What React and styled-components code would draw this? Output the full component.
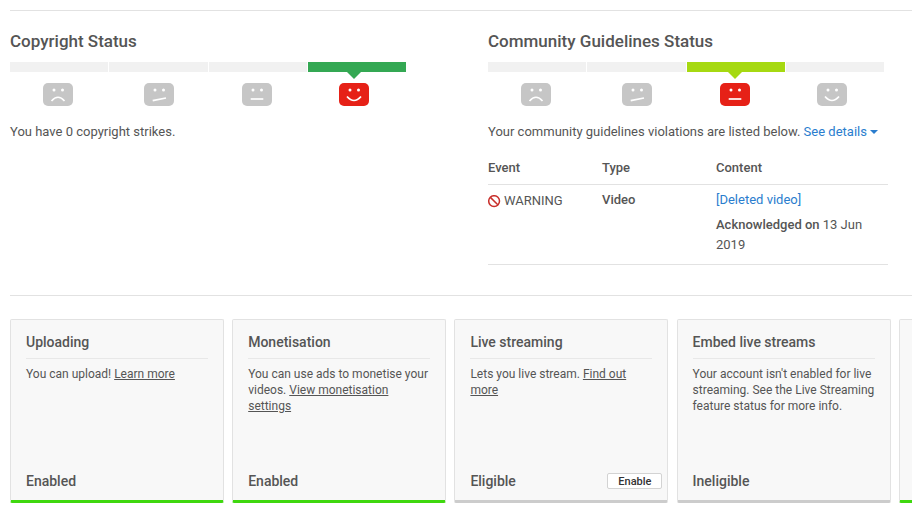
import styled, { createGlobalStyle } from 'styled-components';

const Global = createGlobalStyle`
  html, body { margin: 0; padding: 0; background: #fff; overflow: hidden; }
  body { font-family: Roboto, "Liberation Sans", sans-serif; font-size: 13px; color: #555; }
`;

const Page = styled.div`
  width: 912px;
  height: 512px;
  overflow: hidden;
  padding: 10px 0 0 10px;
  box-sizing: border-box;
`;
const Rule = styled.hr`
  margin: 0;
  border: 0;
  border-top: 1px solid #e2e2e2;
`;
const StatusRow = styled.div`
  display: flex;
  height: 284px;
`;
const StatusCol = styled.section`
  flex: 0 0 478px;
  padding-top: 20px;
`;
const Heading = styled.h2`
  margin: 0 0 11px;
  font-size: 17px;
  line-height: 20px;
  font-weight: 500;
  color: #555;
`;
const Meter = styled.div`
  display: grid;
  grid-template-columns: repeat(4, 98.25px);
  column-gap: 1px;
  width: 396px;
`;
const Segment = styled.div`
  height: 10px;
  background: ${p => p.$color || '#f1f1f1'};
`;
const Faces = styled.div`
  display: grid;
  grid-template-columns: repeat(4, 99px);
  width: 396px;
  margin-top: 11px;
`;
const FaceCell = styled.div`
  position: relative;
  height: 23px;
  padding-left: ${p => p.$offset}px;
`;
const Caret = styled.span`
  position: absolute;
  left: ${p => p.$offset + 8}px;
  top: -11px;
  border-style: solid;
  border-width: 7px 7px 0;
  border-color: ${p => p.$color} transparent transparent;
`;
const StatusText = styled.p`
  margin: 18px 0 0;
  line-height: 16px;
`;
const DetailLink = styled.a`
  color: #2a7dce;
`;
const Arrow = styled.span`
  display: inline-block;
  margin-left: 3px;
  vertical-align: 2px;
  border-style: solid;
  border-width: 4px 4px 0;
  border-color: #2a7dce transparent transparent;
`;
const Table = styled.div`
  display: grid;
  grid-template-columns: 114px 114px 172px;
  width: 400px;
  margin-top: 20px;
`;
const HeadCell = styled.div`
  font-weight: 500;
  line-height: 16px;
  padding-bottom: 8px;
  border-bottom: 1px solid #e2e2e2;
`;
const Cell = styled.div`
  padding-top: 7px;
  line-height: 16px;
  height: 72px;
  border-bottom: 1px solid #e2e2e2;
  font-weight: ${p => (p.$bold ? 500 : 400)};
`;
const Warning = styled.div`
  display: flex;
  align-items: center;
  gap: 3px;
  margin-top: 1px;
`;
const ContentLink = styled.a`
  color: #2a7dce;
`;
const Acknowledged = styled.div`
  margin-top: 7px;
  line-height: 20px;
  b { font-weight: 500; }
`;
const Cards = styled.div`
  display: flex;
  gap: 8.2px;
  margin-top: 23px;
`;
const Card = styled.article`
  flex: 0 0 214px;
  height: 184px;
  box-sizing: border-box;
  display: flex;
  flex-direction: column;
  padding: 13px 15px 0;
  background: #f8f8f8;
  border: 1px solid #e2e2e2;
  border-bottom: 3px solid ${p => p.$bar};
  border-radius: 2px;
`;
const CardTitle = styled.h3`
  margin: 0;
  padding-bottom: 6px;
  border-bottom: 1px solid #e8e8e8;
  font-size: 14px;
  line-height: 19px;
  font-weight: 500;
  color: #555;
`;
const CardText = styled.p`
  margin: 7px 0 0;
  flex: 1;
  font-size: 12px;
  line-height: 16px;
  a { color: #555; text-decoration: underline; }
`;
const CardFoot = styled.div`
  display: flex;
  align-items: center;
  justify-content: space-between;
  height: 16px;
  margin-bottom: 11px;
  margin-right: -10px;
  font-size: 14px;
  font-weight: 500;
`;
const EnableButton = styled.button`
  width: 55px;
  height: 16px;
  padding: 0;
  background: #fff;
  border: 1px solid #d3d3d3;
  border-radius: 2px;
  font: 500 11px Roboto, sans-serif;
  color: #333;
`;

const mouths = [
  'M8.5 18 Q15 10.5 21.5 18',
  'M8.7 17.7 L22 15',
  'M8.7 16 H21.3',
  'M8 13.5 Q15 21.5 22 13.5',
];

const Face = ({ mood, active }) => (
  <svg width="30" height="23" viewBox="0 0 30 23">
    <rect width="30" height="23" rx="5" fill={active ? '#e62117' : '#c6c6c6'} />
    <circle cx="11" cy="7" r="1.5" fill="#fff" />
    <circle cx="19.5" cy="7" r="1.5" fill="#fff" />
    <path d={mouths[mood]} fill="none" stroke="#fff" strokeWidth="1.7" />
  </svg>
);

const BanIcon = () => (
  <svg width="13" height="13" viewBox="0.4 0.4 13 13">
    <circle cx="6.5" cy="6.5" r="5.4" fill="none" stroke="#c9302c" strokeWidth="1.5" />
    <path d="M2.8 2.8 L10.2 10.2" stroke="#c9302c" strokeWidth="1.5" />
  </svg>
);

const offsets = [33, 35, 34, 32];

const StatusMeter = ({ active, color }) => (
  <>
    <Meter>
      {offsets.map((_, i) => (
        <Segment key={i} $color={i === active ? color : null} />
      ))}
    </Meter>
    <Faces>
      {offsets.map((offset, i) => (
        <FaceCell key={i} $offset={offset}>
          {i === active && <Caret $offset={offset} $color={color} />}
          <Face mood={i} active={i === active} />
        </FaceCell>
      ))}
    </Faces>
  </>
);

const GREEN = '#3fd80f';
const GREY = '#cccccc';

export default function App() {
  return (
    <Page>
      <Global />
      <Rule />
      <StatusRow>
        <StatusCol>
          <Heading>Copyright Status</Heading>
          <StatusMeter active={3} color="#34a853" />
          <StatusText>You have 0 copyright strikes.</StatusText>
        </StatusCol>
        <StatusCol>
          <Heading>Community Guidelines Status</Heading>
          <StatusMeter active={2} color="#a6d911" />
          <StatusText>
            Your community guidelines violations are listed below.{' '}
            <DetailLink>See details<Arrow /></DetailLink>
          </StatusText>
          <Table>
            <HeadCell>Event</HeadCell>
            <HeadCell>Type</HeadCell>
            <HeadCell>Content</HeadCell>
            <Cell>
              <Warning><BanIcon />WARNING</Warning>
            </Cell>
            <Cell $bold>Video</Cell>
            <Cell>
              <ContentLink>[Deleted video]</ContentLink>
              <Acknowledged><b>Acknowledged on</b> 13 Jun 2019</Acknowledged>
            </Cell>
          </Table>
        </StatusCol>
      </StatusRow>
      <Rule />
      <Cards>
        <Card $bar={GREEN}>
          <CardTitle>Uploading</CardTitle>
          <CardText>You can upload! <a>Learn more</a></CardText>
          <CardFoot>Enabled</CardFoot>
        </Card>
        <Card $bar={GREEN}>
          <CardTitle>Monetisation</CardTitle>
          <CardText>You can use ads to monetise your videos. <a>View monetisation settings</a></CardText>
          <CardFoot>Enabled</CardFoot>
        </Card>
        <Card $bar={GREY}>
          <CardTitle>Live streaming</CardTitle>
          <CardText>Lets you live stream. <a>Find out more</a></CardText>
          <CardFoot>Eligible<EnableButton>Enable</EnableButton></CardFoot>
        </Card>
        <Card $bar={GREY}>
          <CardTitle>Embed live streams</CardTitle>
          <CardText>Your account isn't enabled for live streaming. See the Live Streaming feature status for more info.</CardText>
          <CardFoot>Ineligible</CardFoot>
        </Card>
        <Card $bar={GREEN} />
      </Cards>
    </Page>
  );
}
